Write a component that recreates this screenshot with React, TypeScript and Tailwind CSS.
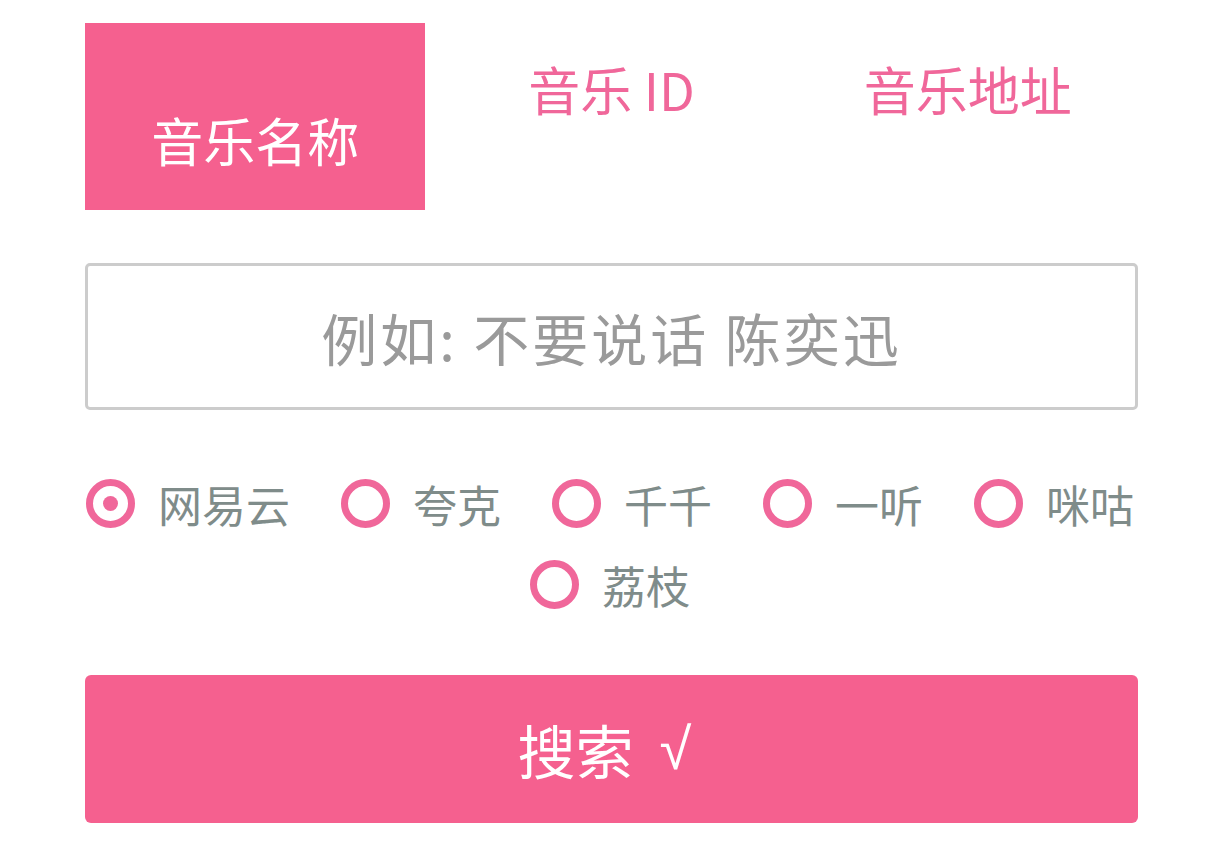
import React, { useState } from 'react';

const tabs = ['音乐名称', '音乐 ID', '音乐地址'];
const sources = ['网易云', '夸克', '千千', '一听', '咪咕', '荔枝'];

export default function App() {
  const [tab, setTab] = useState(0);
  const [source, setSource] = useState(0);

  return (
    <div
      className="h-screen overflow-hidden bg-white pl-[85px] pr-[73px] pt-[23px]"
      style={{ fontFamily: '"Noto Sans CJK SC", "Noto Sans", sans-serif' }}
    >
      {/* Tabs */}
      <div className="grid grid-cols-3 gap-4">
        {tabs.map((t, i) => (
          <button
            key={t}
            onClick={() => setTab(i)}
            className={`h-[187px] flex justify-center text-[52px] leading-none ${
              i === tab ? 'bg-[#f5608f] text-white items-end pb-[44px]' : 'text-[#f0679a] items-start pt-[40px]'
            }`}
          >
            {t}
          </button>
        ))}
      </div>

      {/* Input */}
      <div className="mt-[53px]">
        <input
          className="w-full h-[147px] border-[3px] border-[#cccccc] rounded-[5px] text-center text-[56px] tracking-[3px] text-[#555] placeholder:text-[#9a9a9a] outline-none"
          placeholder="例如: 不要说话 陈奕迅"
        />
      </div>

      {/* Sources */}
      <div className="mt-[61px] flex flex-wrap justify-center gap-x-[51px] gap-y-[16px] pr-[3px]">
        {sources.map((s, i) => (
          <label key={s} className="flex items-center gap-[23px] h-[65px] cursor-pointer" onClick={() => setSource(i)}>
            <span className="w-[49px] h-[49px] rounded-full border-[7px] border-[#f0679a] flex items-center justify-center">
              {i === source && <span className="w-[15px] h-[15px] rounded-full bg-[#f0679a]" />}
            </span>
            <span className="text-[44px] leading-none text-[#7f8c8a]">{s}</span>
          </label>
        ))}
      </div>

      {/* Search */}
      <button className="mt-[58px] w-full h-[148px] rounded-[6px] bg-[#f5608f] text-white text-[58px] leading-none flex items-center justify-center gap-[26px] pr-[14px]">
        <span>搜索</span>
        <span style={{ fontFamily: '"Liberation Sans", sans-serif' }}>√</span>
      </button>
    </div>
  );
}
